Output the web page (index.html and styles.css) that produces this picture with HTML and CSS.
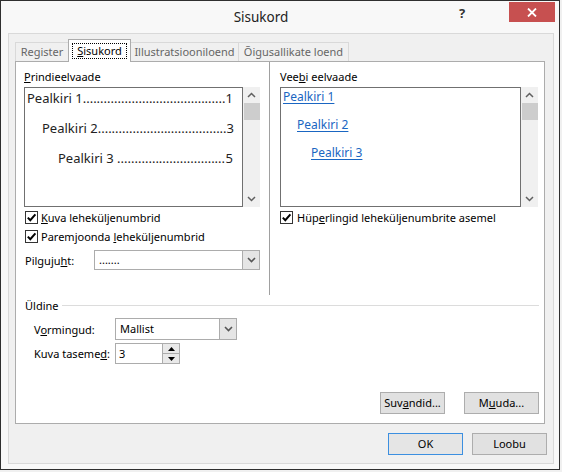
FILE: index.html
```html
<!DOCTYPE html>
<html lang="et">
<head>
<meta charset="utf-8">
<title>Sisukord</title>
<link rel="stylesheet" href="styles.css">
</head>
<body>
<div class="window">
  <div class="titlebar">
    <div class="title">Sisukord</div>
    <div class="controls">
      <span class="help">?</span>
      <span class="close"><svg width="10" height="9" viewBox="0 0 10 9"><path d="M1 0.5 L9 8.5 M9 0.5 L1 8.5" stroke="#fff" stroke-width="1.8" fill="none"/></svg></span>
    </div>
  </div>
  <div class="panel">
    <div class="tabs">
      <div class="tab t-register">Register</div>
      <div class="tab active t-sisu"><span class="focus"><u>S</u>isukord</span></div>
      <div class="tab t-illu">Illustratsiooniloend</div>
      <div class="tab t-oigus">Õigusallikate loend</div>
    </div>
    <div class="page">
      <div class="columns">
        <div class="col col-left">
          <div class="label"><u>P</u>rindieelvaade</div>
          <div class="preview">
            <div class="preview-box print">
              <div class="toc-row lvl1"><span>Pealkiri 1.........................................</span><span class="num">1</span></div>
              <div class="toc-row lvl2"><span>Pealkiri 2.....................................</span><span class="num">3</span></div>
              <div class="toc-row lvl3"><span>Pealkiri 3 ...............................</span><span class="num">5</span></div>
            </div>
            <div class="scrollbar">
              <div class="arrow"><svg width="9" height="6" viewBox="0 0 9 6"><path d="M1 5 L4.5 1.5 L8 5" stroke="#606060" stroke-width="1.5" fill="none"/></svg></div>
              <div class="thumb"></div>
              <div class="track"></div>
              <div class="arrow"><svg width="9" height="6" viewBox="0 0 9 6"><path d="M1 1 L4.5 4.5 L8 1" stroke="#606060" stroke-width="1.5" fill="none"/></svg></div>
            </div>
          </div>
          <div class="check first">
            <span class="box"><svg width="11" height="11" viewBox="0 0 11 11"><path d="M1.8 5.6 L4.3 8.2 L9.4 2.4" stroke="#000" stroke-width="2" fill="none"/></svg></span>
            <span><u>K</u>uva leheküljenumbrid</span>
          </div>
          <div class="check">
            <span class="box"><svg width="11" height="11" viewBox="0 0 11 11"><path d="M1.8 5.6 L4.3 8.2 L9.4 2.4" stroke="#000" stroke-width="2" fill="none"/></svg></span>
            <span>Paremjoonda <u>l</u>eheküljenumbrid</span>
          </div>
          <div class="field-row">
            <span class="field-label">Pilguju<u>h</u>t:</span>
            <div class="combo wide">
              <span class="combo-text">.......</span>
              <span class="combo-btn"><svg width="9" height="6" viewBox="0 0 9 6"><path d="M1 1 L4.5 4.5 L8 1" stroke="#555" stroke-width="1.6" fill="none"/></svg></span>
            </div>
          </div>
        </div>
        <div class="sep"></div>
        <div class="col col-right">
          <div class="label">Vee<u>b</u>i eelvaade</div>
          <div class="preview">
            <div class="preview-box web">
              <a class="link l1">Pealkiri 1</a>
              <a class="link l2">Pealkiri 2</a>
              <a class="link l3">Pealkiri 3</a>
            </div>
            <div class="scrollbar">
              <div class="arrow"><svg width="9" height="6" viewBox="0 0 9 6"><path d="M1 5 L4.5 1.5 L8 5" stroke="#606060" stroke-width="1.5" fill="none"/></svg></div>
              <div class="thumb"></div>
              <div class="track"></div>
              <div class="arrow"><svg width="9" height="6" viewBox="0 0 9 6"><path d="M1 1 L4.5 4.5 L8 1" stroke="#606060" stroke-width="1.5" fill="none"/></svg></div>
            </div>
          </div>
          <div class="check first right">
            <span class="box"><svg width="11" height="11" viewBox="0 0 11 11"><path d="M1.8 5.6 L4.3 8.2 L9.4 2.4" stroke="#000" stroke-width="2" fill="none"/></svg></span>
            <span>Hüp<u>e</u>rlingid leheküljenumbrite asemel</span>
          </div>
        </div>
      </div>
      <div class="group">
        <div class="group-head"><span>Üldine</span><span class="rule"></span></div>
        <div class="form-row row-formats">
          <span class="form-label">V<u>o</u>rmingud:</span>
          <div class="combo formats">
            <span class="combo-text">Mallist</span>
            <span class="combo-btn"><svg width="9" height="6" viewBox="0 0 9 6"><path d="M1 1 L4.5 4.5 L8 1" stroke="#555" stroke-width="1.6" fill="none"/></svg></span>
          </div>
        </div>
        <div class="form-row row-levels">
          <span class="form-label">Kuva taseme<u>d</u>:</span>
          <div class="spin">
            <span class="spin-text">3</span>
            <span class="spin-btns">
              <span class="spin-btn"><svg width="7" height="4" viewBox="0 0 7 4"><path d="M0 4 L3.5 0 L7 4 Z" fill="#000"/></svg></span>
              <span class="spin-btn"><svg width="7" height="4" viewBox="0 0 7 4"><path d="M0 0 L3.5 4 L7 0 Z" fill="#000"/></svg></span>
            </span>
          </div>
        </div>
      </div>
      <div class="page-buttons">
        <span class="btn w65">Suv<u>a</u>ndid...</span>
        <span class="btn w75">M<u>u</u>uda...</span>
      </div>
    </div>
    <div class="dialog-buttons">
      <span class="btn w75 default">OK</span>
      <span class="btn w75">Loobu</span>
    </div>
  </div>
</div>
</body>
</html>
```

FILE: styles.css
```css
html, body {
  margin: 0;
  padding: 0;
}
body {
  background: #f0f0f0;
  font-family: "Noto Sans", "Open Sans", sans-serif;
  font-size: 11px;
  color: #000;
}
u {
  text-decoration: underline;
  text-underline-offset: 1px;
}
.window {
  width: 560px;
  height: 470px;
  box-sizing: border-box;
  border: 1px solid #2f2f2f;
  background: #f8f8f8;
  display: flex;
  flex-direction: column;
}
.titlebar {
  height: 32px;
  display: grid;
  grid-template-columns: 1fr;
}
.title {
  grid-area: 1 / 1;
  justify-self: center;
  margin-right: 38px;
  font-size: 13.5px;
  line-height: 16px;
  padding-top: 8px;
  color: #222;
}
.controls {
  grid-area: 1 / 1;
  justify-self: end;
  display: flex;
  align-items: flex-start;
  padding-right: 4px;
}
.help {
  width: 14px;
  margin-right: 40px;
  margin-top: 3px;
  text-align: center;
  font-weight: bold;
  font-size: 13px;
  line-height: 18px;
  color: #333;
}
.close {
  width: 46px;
  height: 20px;
  margin-top: 1px;
  background: #c75050;
  display: flex;
  align-items: center;
  justify-content: center;
}
.panel {
  margin: 0 5px 5px 7px;
  height: 431px;
  box-sizing: border-box;
  border: 1px solid #d9d9d9;
  background: #f0f0f0;
  padding: 5px 6px 0 6px;
  display: flex;
  flex-direction: column;
}
.tabs {
  height: 22px;
  display: flex;
  align-items: flex-end;
}
.tab {
  height: 19px;
  box-sizing: border-box;
  border: 1px solid #d9d9d9;
  border-bottom: none;
  background: #f0f0f0;
  color: #666;
  display: flex;
  align-items: center;
  justify-content: center;
  line-height: 16px;
  margin-left: -1px;
}
.t-register { width: 54px; margin-left: 0; }
.t-sisu { width: 63px; }
.t-illu { width: 109px; }
.t-oigus { width: 111px; }
.tab.active {
  height: 23px;
  margin-bottom: -1px;
  background: #fff;
  border-color: #acacac;
  color: #000;
  position: relative;
  z-index: 1;
  align-items: flex-start;
  padding-top: 3px;
}
.focus {
  display: block;
  width: 55px;
  height: 16px;
  box-sizing: border-box;
  border: 1px dotted #000;
  text-align: center;
  line-height: 14px;
}
.page {
  height: 363px;
  margin-right: 2px;
  box-sizing: border-box;
  border: 1px solid #acacac;
  background: #fff;
  display: flex;
  flex-direction: column;
}
.columns {
  display: grid;
  grid-template-columns: 253px 1px 1fr;
  height: 233px;
}
.sep {
  background: #a0a0a0;
}
.col-left {
  padding: 7px 9px 0 8px;
}
.col-right {
  padding: 7px 6px 0 10px;
}
.label {
  height: 16px;
  line-height: 16px;
  white-space: nowrap;
}
.preview {
  display: flex;
  height: 120px;
  margin-top: 2px;
}
.preview-box {
  flex: 1;
  box-sizing: border-box;
  border: 1px solid #707070;
  background: #fff;
  min-width: 0;
}
.print {
  padding: 0 9px 0 2px;
  display: flex;
  flex-direction: column;
  gap: 10px;
  font-size: 13px;
  color: #222;
}
.toc-row {
  display: flex;
  justify-content: space-between;
  line-height: 20px;
  white-space: nowrap;
}
.lvl2 { padding-left: 15px; }
.lvl3 { padding-left: 31px; }
.web {
  padding: 0 0 0 2px;
  display: flex;
  flex-direction: column;
  align-items: flex-start;
  gap: 8px;
  font-size: 12px;
}
.link {
  color: #1a66c2;
  text-decoration: underline;
  text-underline-offset: 2px;
  line-height: 20px;
}
.l1 { margin-top: -1px; }
.l2 { margin-left: 14px; }
.l3 { margin-left: 28px; }
.scrollbar {
  width: 17px;
  background: #f0f0f0;
  display: flex;
  flex-direction: column;
}
.scrollbar .arrow {
  height: 16px;
  display: flex;
  align-items: center;
  justify-content: center;
}
.scrollbar .thumb {
  height: 17px;
  background: #cdcdcd;
  margin: 0 0 0 1px;
}
.scrollbar .track {
  flex: 1;
}
.check {
  display: flex;
  align-items: center;
  gap: 3px;
  height: 19px;
  white-space: nowrap;
}
.check.first {
  margin-top: 1px;
}
.box {
  width: 13px;
  height: 13px;
  box-sizing: border-box;
  border: 1px solid #333;
  background: #fff;
  display: flex;
  align-items: center;
  justify-content: center;
  margin-left: 1px;
}
.check.right {
  gap: 4px;
}
.check.right .box {
  margin-left: 0;
}
.field-row {
  display: flex;
  align-items: center;
  height: 20px;
  margin-top: 4px;
}
.field-label {
  width: 69px;
  padding-left: 1px;
}
.combo {
  display: flex;
  box-sizing: border-box;
  border: 1px solid #acacac;
  background: #fff;
}
.combo.wide {
  flex: 1;
  height: 20px;
}
.combo-text {
  flex: 1;
  padding-left: 4px;
  line-height: 18px;
}
.combo-btn {
  width: 16px;
  background: #e5e5e5;
  border-left: 1px solid #acacac;
  display: flex;
  align-items: center;
  justify-content: center;
}
.group {
  padding: 0 5px 0 9px;
}
.group-head {
  display: flex;
  align-items: center;
  gap: 4px;
  height: 16px;
  margin-top: 2px;
}
.rule {
  flex: 1;
  height: 1px;
  background: #dcdcdc;
}
.form-row {
  display: flex;
  align-items: center;
  padding-left: 9px;
}
.form-label {
  width: 81px;
  white-space: nowrap;
}
.row-formats {
  margin-top: 5px;
  height: 22px;
}
.combo.formats {
  width: 122px;
  height: 22px;
}
.combo.formats .combo-text {
  line-height: 20px;
}
.row-levels {
  margin-top: 3px;
  height: 21px;
}
.spin {
  width: 65px;
  height: 21px;
  box-sizing: border-box;
  border: 1px solid #acacac;
  background: #fff;
  display: flex;
}
.spin-text {
  flex: 1;
  padding-left: 3px;
  line-height: 19px;
}
.spin-btns {
  width: 16px;
  display: flex;
  flex-direction: column;
  border-left: 1px solid #acacac;
}
.spin-btn {
  flex: 1;
  background: #e9e9e9;
  display: flex;
  align-items: center;
  justify-content: center;
}
.spin-btn + .spin-btn {
  border-top: 1px solid #acacac;
}
.page-buttons {
  margin-top: auto;
  margin-bottom: 9px;
  padding-right: 5px;
  display: flex;
  justify-content: flex-end;
  gap: 19px;
}
.btn {
  height: 22px;
  box-sizing: border-box;
  border: 1px solid #adadad;
  background: #e1e1e1;
  display: flex;
  align-items: center;
  justify-content: center;
  line-height: 16px;
}
.w65 { width: 65px; }
.w75 { width: 75px; }
.btn.default {
  border-color: #3c8fe0;
  background: #e5e5e5;
}
.dialog-buttons {
  margin-top: 9px;
  display: flex;
  justify-content: flex-end;
  gap: 9px;
}
```
